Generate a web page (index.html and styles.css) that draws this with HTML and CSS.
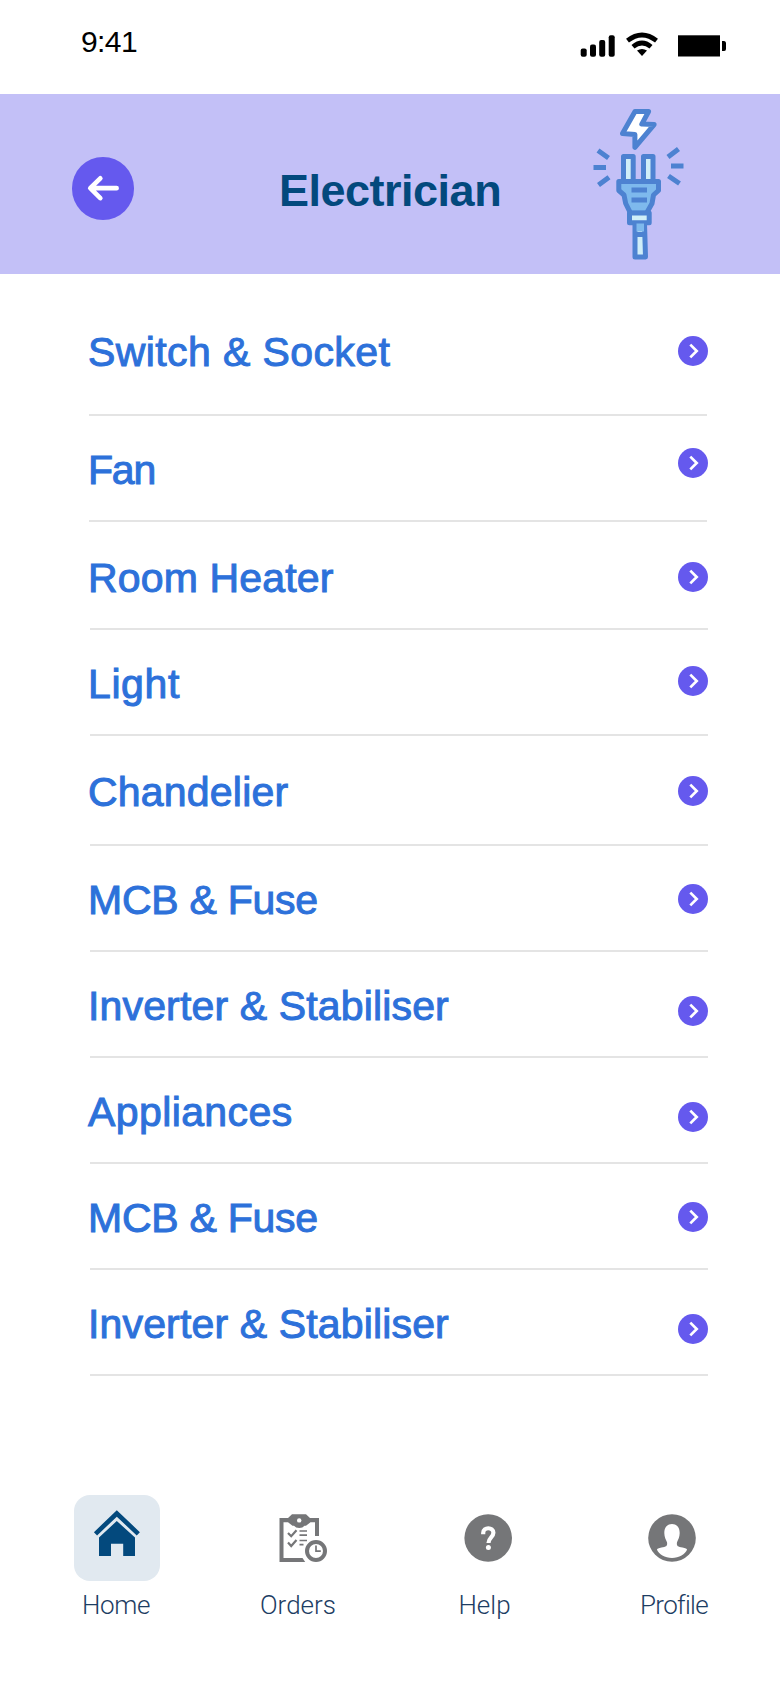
FILE: index.html
```html
<!DOCTYPE html>
<html lang="en">
<head>
<meta charset="utf-8">
<title>Electrician</title>
<link rel="stylesheet" href="styles.css">
</head>
<body>
<svg class="defs" width="0" height="0" aria-hidden="true">
  <symbol id="chevron" viewBox="0 0 30 30">
    <circle cx="15" cy="15" r="15" fill="#6559ee"/>
    <path d="M12.3 8.600 18.700 15l-6.400 6.400" fill="none" stroke="#fff" stroke-width="2.700"/>
  </symbol>
</svg>
<div class="screen">
  <div class="status">
    <span class="time">9:41</span>
    <svg class="status-icons" viewBox="0 0 150 26" width="150" height="26">
      <rect x="0.7" y="16.5" width="6" height="8.2" rx="2"/>
      <rect x="10" y="12.5" width="6" height="12.2" rx="2"/>
      <rect x="19.2" y="8" width="6" height="16.7" rx="2"/>
      <rect x="28.7" y="3.2" width="6" height="21.5" rx="2"/>
      <g fill="none" stroke="#000" stroke-width="4.7">
        <path d="M47.500 8.700q14.500-11.400 29 0"/>
        <path d="M53 14.700q9-7.400 18 0"/>
      </g>
      <path d="M57 18.600q5-3.400 10 0l-5 5.400z"/>
      <rect x="98" y="3.3" width="42" height="21.2"/>
      <path d="M142 9h2.200q1.800.300 1.800 2v6q0 1.800-1.800 2H142z"/>
    </svg>
  </div>
  <header class="header">
    <button class="back" aria-label="Back">
      <svg viewBox="0 0 62 62" width="62" height="62">
        <path d="M28.300 21.300 18.300 31.200l10 9.900M19 31.200h25.600" fill="none" stroke="#fff" stroke-width="4.700" stroke-linecap="round" stroke-linejoin="round"/>
      </svg>
    </button>
    <h1 class="title">Electrician</h1>
    <svg class="plug" viewBox="0 0 92 152" width="92" height="152">
      <g stroke="#4d82d1" stroke-width="5" stroke-linejoin="round">
        <path d="M42 3.500h13.600l-6.800 12.600 12.300.500-19.200 22.800V26.500L29.500 25.500z" fill="#fff"/>
        <path d="M30.500 74V48.500h9.700V74zM50.500 74V48.500h9.500V74z" fill="#d0eef8"/>
        <path d="M25.800 73.500h39.700v9l-5 4.500-1.500 8.500-5.500 9.700H37.500L32.700 95.500 31 87l-5.200-4.500z" fill="#7eb9ed"/>
        <path d="M36.500 105h19.700v9.800H36.500z" fill="#d0eef8"/>
        <path d="M42 115.500h9.500l1 33.500H42z" fill="#d0eef8"/>
      </g>
      <path d="M43.500 115.500h7.500v8h-7.500z" fill="#7eb9ed"/>
      <path d="M42 124h10v5H42zM38.500 79.500H54v5H38.500zM38.500 89.500H54v5H38.500z" fill="#4d82d1"/>
      <path d="M5 42.500 15.500 50M.500 59.500H13M5.500 77l10.500-7.800M85.500 41 75 49M90.500 58H78M86.500 75.500 75.500 68" fill="none" stroke="#4d82d1" stroke-width="5"/>
    </svg>
  </header>
  <ul class="services">
    <li class="row r1"><span class="label">Switch &amp; Socket</span><svg class="go"><use href="#chevron"/></svg></li>
    <li class="row r2"><span class="label">Fan</span><svg class="go"><use href="#chevron"/></svg></li>
    <li class="row r3"><span class="label">Room Heater</span><svg class="go"><use href="#chevron"/></svg></li>
    <li class="row r4"><span class="label">Light</span><svg class="go"><use href="#chevron"/></svg></li>
    <li class="row r5"><span class="label">Chandelier</span><svg class="go"><use href="#chevron"/></svg></li>
    <li class="row r6"><span class="label">MCB &amp; Fuse</span><svg class="go"><use href="#chevron"/></svg></li>
    <li class="row r7"><span class="label">Inverter &amp; Stabiliser</span><svg class="go"><use href="#chevron"/></svg></li>
    <li class="row r8"><span class="label">Appliances</span><svg class="go"><use href="#chevron"/></svg></li>
    <li class="row r9"><span class="label">MCB &amp; Fuse</span><svg class="go"><use href="#chevron"/></svg></li>
    <li class="row r10"><span class="label">Inverter &amp; Stabiliser</span><svg class="go"><use href="#chevron"/></svg></li>
  </ul>
  <nav class="tabs">
    <a class="tab home">
      <span class="tile active">
        <svg viewBox="0 0 86 86" width="86" height="86" fill="#03497d">
          <path d="M21.500 38.800 42.800 18.500 64.300 38.800" fill="none" stroke="#03497d" stroke-width="4.600"/>
          <path d="M25 42.500 42.800 26 61 42.500V61H49.200V48.800H37V61H25z"/>
        </svg>
      </span>
      <span class="name">Home</span>
    </a>
    <a class="tab orders">
      <span class="tile">
        <svg viewBox="0 0 86 86" width="86" height="86" fill="#757678">
          <path d="M27.500 23h8.500l4-3.800h14l4 3.800h9v18h-4V27.200H58.500L54 30.800h-1.500a6 4.500 0 0 1-10.500 0H40.500L36 27.200h-4.500V63h19l2.700 4H27.500z"/>
          <circle cx="47.200" cy="25.400" r="2.200" fill="#fff"/>
          <path d="M36 38l3.200 3.200 5.300-6M36 47.500l3.200 3.500 5.300-6" fill="none" stroke="#757678" stroke-width="2.200"/>
          <path d="M47.500 36h7.500M47.500 40.200h7.500M47.500 45.500h7.500M47.500 49.700h4" stroke="#757678" stroke-width="1.700"/>
          <circle cx="64" cy="56" r="12.500" fill="#fff"/>
          <circle cx="64" cy="56" r="9" fill="#fff" stroke="#757678" stroke-width="4"/>
          <path d="M64 50.500v5.700h4.800" fill="none" stroke="#757678" stroke-width="1.700"/>
        </svg>
      </span>
      <span class="name">Orders</span>
    </a>
    <a class="tab help">
      <span class="tile">
        <svg viewBox="0 0 86 86" width="86" height="86">
          <circle cx="43.200" cy="43" r="23.800" fill="#757678"/>
          <path d="M38.200 39.200V38c0-6.300 10.200-6.300 10.200-.2 0 4.500-4.900 4.700-4.900 10.200" fill="none" stroke="#fff" stroke-width="4.200"/>
          <circle cx="43.400" cy="52.500" r="2.500" fill="#fff"/>
        </svg>
      </span>
      <span class="name">Help</span>
    </a>
    <a class="tab profile">
      <span class="tile">
        <svg viewBox="0 0 86 86" width="86" height="86">
          <circle cx="43" cy="43" r="23.800" fill="#757678"/>
          <path d="M43 29c5 0 7.700 3.600 7.700 9 0 4.200-1.600 6.600-2.700 9.200-.700 4 1.200 4.600 5.500 5.300 2.800.5 4.700 1.200 4.500 2.200C56.500 59 50 63 43 63s-13.500-4-15-8.300c-.200-1 1.700-1.700 4.500-2.200 4.300-.700 6.200-1.300 5.500-5.300-1.100-2.600-2.700-5-2.700-9.200 0-5.400 2.700-9 7.700-9z" fill="#fff"/>
        </svg>
      </span>
      <span class="name">Profile</span>
    </a>
  </nav>
</div>
</body>
</html>
```
FILE: styles.css
```css
* { box-sizing: border-box; }

body {
  margin: 0;
  background: #fff;
  font-family: "Liberation Sans", Arial, sans-serif;
}

.defs { display: block; }

.screen {
  width: 780px;
  height: 1688px;
  overflow: hidden;
}

.status {
  height: 94px;
  display: flex;
  justify-content: space-between;
  padding: 24px 50px 0 81px;
}

.time {
  font-size: 30px;
  line-height: 36px;
  letter-spacing: -0.6px;
}

.status-icons { margin-top: 8px; }

.header {
  height: 180px;
  background: #c3c0f7;
  display: grid;
  grid-template-columns: 208px 1fr 187px;
  align-items: start;
}

.back {
  width: 62.5px;
  height: 62.5px;
  margin: 63px 0 0 71.5px;
  padding: 0;
  border: 0;
  border-radius: 50%;
  background: #6559ee;
}

.back svg { display: block; }

.title {
  margin: 71px 0 0 71px;
  font-size: 45px;
  line-height: 52px;
  letter-spacing: -0.5px;
  color: #03497d;
}

.plug { margin-top: 14px; }

.services {
  list-style: none;
  margin: 0;
  padding: 0;
}

.row {
  display: flex;
  justify-content: space-between;
  align-items: flex-start;
  height: 106px;
  margin: 0 72px 0 90px;
  border-bottom: 2px solid #e4e4e4;
}

.label {
  margin: 30px 0 0 -2px;
  font-size: 41px;
  line-height: 48px;
  color: #2d71da;
  -webkit-text-stroke: 1px #2d71da;
  white-space: nowrap;
}

.go {
  width: 30px;
  height: 30px;
  margin-top: 44px;
}

.r1, .r2 { margin: 0 73px 0 89px; }
.r1 .label, .r2 .label { margin-left: -1px; }
.r1 .go, .r2 .go { margin-right: -1px; }

.r1 { height: 142px; }
.r1 .label { margin-top: 54px; letter-spacing: 0.4px; }
.r1 .go { margin-top: 62px; }
.r2 .label { letter-spacing: -1.2px; }
.r2 .go { margin-top: 32px; }
.r3 { height: 108px; }
.r3 .label { margin-top: 32px; letter-spacing: 0.15px; }
.r3 .go { margin-top: 40px; }
.r4 .label { letter-spacing: 0.6px; }
.r4 .go { margin-top: 36px; }
.r5 { height: 110px; }
.r5 .label { margin-top: 32px; letter-spacing: 0.2px; }
.r5 .go { margin-top: 40px; }
.r6 .label, .r9 .label { letter-spacing: -0.25px; }
.r6 .go, .r9 .go { margin-top: 38px; }
.r7 .label, .r10 .label { letter-spacing: 0.15px; }
.r8 .label { letter-spacing: 0.4px; }

.tabs {
  display: grid;
  grid-template-columns: repeat(4, 186px);
  padding: 119px 0 0 23px;
}

.tab {
  display: flex;
  flex-direction: column;
  align-items: center;
}

.tile {
  width: 86px;
  height: 86px;
  border-radius: 16px;
}

.tile svg { display: block; }
.tile.active { background: #e1e9f0; }

.name {
  margin-top: 8px;
  font-family: Roboto, "Liberation Sans", sans-serif;
  font-weight: 300;
  font-size: 26px;
  line-height: 32px;
  color: #1d3d63;
}

.home .tile { margin-left: 2px; }
.home .name { letter-spacing: -0.4px; }
.orders .tile { margin-left: -15px; }
.orders .name { margin-left: -8px; }
.help .name { margin-left: -7px; }
.profile .tile { margin-left: -4px; }
.profile .name { letter-spacing: -0.7px; }
```
